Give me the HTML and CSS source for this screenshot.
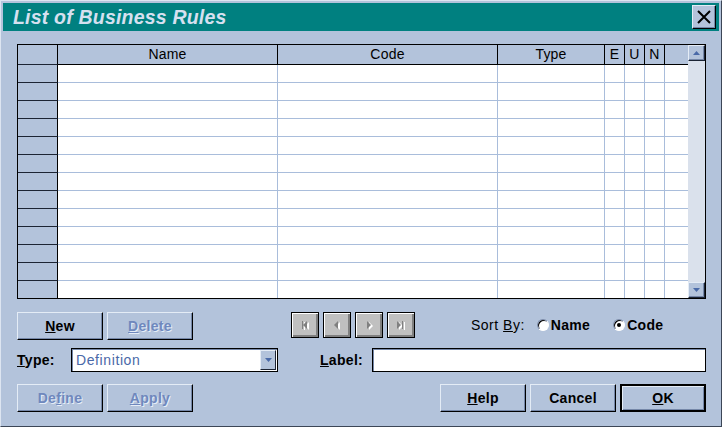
FILE: index.html
```html
<!DOCTYPE html>
<html>
<head>
<meta charset="utf-8">
<link rel="stylesheet" href="styles.css">
</head>
<body>
<div class="window">
  <div class="titlebar">
    <span class="title">List of Business Rules</span>
    <button class="close" aria-label="Close">
      <svg width="14" height="14" viewBox="0 0 14 14"><path d="M1 1 L13 13 M13 1 L1 13" stroke="#000" stroke-width="2" fill="none"/></svg>
    </button>
  </div>
  <div class="content">
    <div class="grid">
      <div class="grid-main">
        <div class="row head">
          <div class="hc rh"></div>
          <div class="hc">Name</div>
          <div class="hc">Code</div>
          <div class="hc">Type</div>
          <div class="hc">E</div>
          <div class="hc">U</div>
          <div class="hc">N</div>
          <div class="hc last"></div>
        </div>
        <div class="row"><div class="rh"></div><div class="c"></div><div class="c"></div><div class="c"></div><div class="c"></div><div class="c"></div><div class="c"></div><div class="c last"></div></div>
        <div class="row"><div class="rh"></div><div class="c"></div><div class="c"></div><div class="c"></div><div class="c"></div><div class="c"></div><div class="c"></div><div class="c last"></div></div>
        <div class="row"><div class="rh"></div><div class="c"></div><div class="c"></div><div class="c"></div><div class="c"></div><div class="c"></div><div class="c"></div><div class="c last"></div></div>
        <div class="row"><div class="rh"></div><div class="c"></div><div class="c"></div><div class="c"></div><div class="c"></div><div class="c"></div><div class="c"></div><div class="c last"></div></div>
        <div class="row"><div class="rh"></div><div class="c"></div><div class="c"></div><div class="c"></div><div class="c"></div><div class="c"></div><div class="c"></div><div class="c last"></div></div>
        <div class="row"><div class="rh"></div><div class="c"></div><div class="c"></div><div class="c"></div><div class="c"></div><div class="c"></div><div class="c"></div><div class="c last"></div></div>
        <div class="row"><div class="rh"></div><div class="c"></div><div class="c"></div><div class="c"></div><div class="c"></div><div class="c"></div><div class="c"></div><div class="c last"></div></div>
        <div class="row"><div class="rh"></div><div class="c"></div><div class="c"></div><div class="c"></div><div class="c"></div><div class="c"></div><div class="c"></div><div class="c last"></div></div>
        <div class="row"><div class="rh"></div><div class="c"></div><div class="c"></div><div class="c"></div><div class="c"></div><div class="c"></div><div class="c"></div><div class="c last"></div></div>
        <div class="row"><div class="rh"></div><div class="c"></div><div class="c"></div><div class="c"></div><div class="c"></div><div class="c"></div><div class="c"></div><div class="c last"></div></div>
        <div class="row"><div class="rh"></div><div class="c"></div><div class="c"></div><div class="c"></div><div class="c"></div><div class="c"></div><div class="c"></div><div class="c last"></div></div>
        <div class="row"><div class="rh"></div><div class="c"></div><div class="c"></div><div class="c"></div><div class="c"></div><div class="c"></div><div class="c"></div><div class="c last"></div></div>
        <div class="row final"><div class="rh"></div><div class="c"></div><div class="c"></div><div class="c"></div><div class="c"></div><div class="c"></div><div class="c"></div><div class="c last"></div></div>
      </div>
      <div class="vscroll">
        <div class="sbtn"><svg width="7" height="4" viewBox="0 0 7 4"><path d="M0 4 L3.5 0 L7 4 Z" fill="#4a6aa8"/></svg></div>
        <div class="track"></div>
        <div class="sbtn"><svg width="7" height="4" viewBox="0 0 7 4"><path d="M0 0 L3.5 4 L7 0 Z" fill="#4a6aa8"/></svg></div>
      </div>
    </div>

    <div class="line line1">
      <button class="btn"><u>N</u>ew</button>
      <button class="btn disabled"><u>D</u>elete</button>
      <div class="navgroup">
        <button class="nav"><svg width="10" height="10" viewBox="0 0 10 10"><path d="M3 1 h1 v8 h-1 Z M8 1 L4 5 L8 9 Z" fill="#fff" transform="translate(1,1)"/><path d="M2 1 h1 v8 h-1 Z M7 1 L3 5 L7 9 Z" fill="#808080"/></svg></button>
        <button class="nav"><svg width="10" height="10" viewBox="0 0 10 10"><path d="M7 1 L3 5 L7 9 Z" fill="#fff" transform="translate(1,1)"/><path d="M6 1 L2 5 L6 9 Z" fill="#808080"/></svg></button>
        <button class="nav"><svg width="10" height="10" viewBox="0 0 10 10"><path d="M4 1 L8 5 L4 9 Z" fill="#fff" transform="translate(1,1)"/><path d="M3 1 L7 5 L3 9 Z" fill="#808080"/></svg></button>
        <button class="nav"><svg width="10" height="10" viewBox="0 0 10 10"><path d="M2 1 L6 5 L2 9 Z M7 1 h1 v8 h-1 Z" fill="#fff" transform="translate(1,1)"/><path d="M1 1 L5 5 L1 9 Z M6 1 h1 v8 h-1 Z" fill="#808080"/></svg></button>
      </div>
      <div class="sortby">
        <span class="sortlabel">Sort <u>B</u>y:</span>
        <span class="radio"><span class="dot"></span></span><span class="rlabel">Name</span>
        <span class="radio checked"><span class="dot"></span></span><span class="rlabel">Code</span>
      </div>
    </div>

    <div class="line line2">
      <span class="flabel type-label"><u>T</u>ype:</span>
      <div class="combo">
        <span class="combo-text">Definition</span>
        <span class="combo-btn"><svg width="7" height="4" viewBox="0 0 7 4"><path d="M0 0 L3.5 4 L7 0 Z" fill="#4a6aa8"/></svg></span>
      </div>
      <span class="flabel label-label"><u>L</u>abel:</span>
      <div class="textbox"></div>
    </div>

    <div class="line line3">
      <button class="btn disabled">De<u>f</u>ine</button>
      <button class="btn disabled"><u>A</u>pply</button>
      <div class="right-btns">
        <button class="btn"><u>H</u>elp</button>
        <button class="btn">Cancel</button>
        <button class="btn default"><u>O</u>K</button>
      </div>
    </div>
  </div>
</div>
</body>
</html>
```

FILE: styles.css
```css
html, body {
  margin: 0;
  padding: 0;
  background: #b3c3db;
}

.window {
  width: 722px;
  height: 427px;
  box-sizing: border-box;
  background: #b3c3db;
  border: 1px solid;
  border-color: #dde5f1 #3c4656 #3c4656 #dde5f1;
  padding: 2px;
  font-family: "Liberation Sans", Arial, sans-serif;
  font-size: 14px;
  letter-spacing: 0.3px;
  color: #000;
}

.titlebar {
  height: 28px;
  background: #008080;
  display: flex;
  align-items: center;
  justify-content: space-between;
  padding: 0 3px 0 10px;
}

.title {
  color: #d6e0f0;
  font-weight: bold;
  font-style: italic;
  font-size: 19.5px;
  letter-spacing: 0.2px;
}

.close {
  width: 24px;
  height: 24px;
  box-sizing: border-box;
  padding: 0;
  background: #b3c3db;
  border: 1px solid;
  border-color: #e4ecf6 #000 #000 #e4ecf6;
  box-shadow: inset -1px -1px 0 #7587a8;
  display: flex;
  align-items: center;
  justify-content: center;
}

.content {
  padding: 13px 13px 0 14px;
}

/* grid */
.grid {
  width: 689px;
  height: 255px;
  box-sizing: border-box;
  border: 1px solid #000;
  display: flex;
  background: #fff;
}

.grid-main {
  width: 670px;
}

.row {
  display: grid;
  grid-template-columns: 40px 220px 220px 107px 20px 20px 20px 23px;
  height: 18px;
}

.row.head {
  height: 20px;
}

.row.final {
  height: 17px;
}

.hc {
  background: #b3c3db;
  border-right: 1px solid #000;
  border-bottom: 1px solid #000;
  box-sizing: border-box;
  text-align: center;
  line-height: 19px;
  font-size: 14px;
  letter-spacing: 0.2px;
}

.hc.last {
  border-right: none;
}

.rh {
  background: #b3c3db;
  border-right: 1px solid #000;
  border-bottom: 1px solid #1c2434;
  box-sizing: border-box;
}

.row.final .rh,
.row.final .c {
  border-bottom: none;
}

.c {
  border-right: 1px solid #a9bddb;
  border-bottom: 1px solid #a9bddb;
  box-sizing: border-box;
}

.c.last {
  border-right: none;
}

.vscroll {
  width: 17px;
  display: flex;
  flex-direction: column;
  background: #dae1ec;
}

.sbtn {
  height: 16px;
  box-sizing: border-box;
  background: #b3c3db;
  border: 1px solid;
  border-color: #e4ecf6 #1c2434 #1c2434 #e4ecf6;
  box-shadow: inset -1px -1px 0 #7587a8;
  display: flex;
  align-items: center;
  justify-content: center;
}

.track {
  flex: 1;
}

/* control lines */
.line {
  display: flex;
  align-items: center;
}

.line1 {
  margin-top: 13px;
  height: 28px;
  align-items: flex-start;
}

.line2 {
  margin-top: 8px;
  height: 24px;
}

.line3 {
  margin-top: 12px;
  height: 28px;
}

.btn {
  width: 86px;
  height: 28px;
  box-sizing: border-box;
  padding: 0;
  margin: 0 4px 0 0;
  background: #b3c3db;
  border: 1px solid;
  border-color: #e4ecf6 #000 #000 #e4ecf6;
  box-shadow: inset -1px -1px 0 #7587a8;
  font-family: "Liberation Sans", Arial, sans-serif;
  font-weight: bold;
  font-size: 14px;
  letter-spacing: 0.3px;
  color: #000;
}

.btn.disabled {
  color: #6f88bd;
  text-shadow: 1px 1px 0 #e6edf7;
}

.btn.default {
  border: 2px solid #000;
  box-shadow: inset 1px 1px 0 #e4ecf6, inset -1px -1px 0 #7587a8;
}

.navgroup {
  display: flex;
  gap: 4px;
  margin-left: 94px;
}

.nav {
  width: 28px;
  height: 26px;
  box-sizing: border-box;
  padding: 0;
  background: #c0c0c0;
  border: 1px solid #000;
  box-shadow: inset 1px 1px 0 #fff, inset -2px -2px 0 #808080;
  display: flex;
  align-items: center;
  justify-content: center;
}

.sortby {
  display: flex;
  align-items: center;
  height: 26px;
  margin-left: 56px;
}

.sortlabel {
  margin-right: 12px;
  letter-spacing: 0.5px;
}

.radio {
  width: 12px;
  height: 12px;
  box-sizing: border-box;
  border-radius: 50%;
  background: #fff;
  border: 1px solid;
  border-color: #7a8aa8 #fff #fff #7a8aa8;
  box-shadow: inset 1px 1px 0 #000;
  display: inline-flex;
  align-items: center;
  justify-content: center;
  margin-right: 2px;
}

.radio .dot {
  width: 4px;
  height: 4px;
  border-radius: 50%;
  background: transparent;
}

.radio.checked .dot {
  background: #000;
}

.rlabel {
  font-weight: bold;
  margin-right: 23px;
}

.flabel {
  font-weight: bold;
}

.type-label {
  width: 54px;
}

.combo {
  width: 207px;
  height: 24px;
  box-sizing: border-box;
  background: #fff;
  border: 1px solid #000;
  box-shadow: inset 1px 1px 0 #7587a8;
  display: flex;
  align-items: center;
  justify-content: space-between;
  padding: 0 1px 0 4px;
}

.combo-text {
  color: #4a68a8;
  letter-spacing: 0.6px;
}

.combo-btn {
  width: 16px;
  height: 20px;
  box-sizing: border-box;
  background: #b3c3db;
  border: 1px solid;
  border-color: #e4ecf6 #1c2434 #1c2434 #e4ecf6;
  display: flex;
  align-items: center;
  justify-content: center;
}

.label-label {
  margin-left: 42px;
  width: 52px;
}

.textbox {
  width: 334px;
  height: 24px;
  box-sizing: border-box;
  background: #fff;
  border: 1px solid #000;
  box-shadow: inset 1px 1px 0 #7587a8;
}

.right-btns {
  display: flex;
  margin-left: auto;
}

.right-btns .btn:last-child {
  margin-right: 0;
}
```
